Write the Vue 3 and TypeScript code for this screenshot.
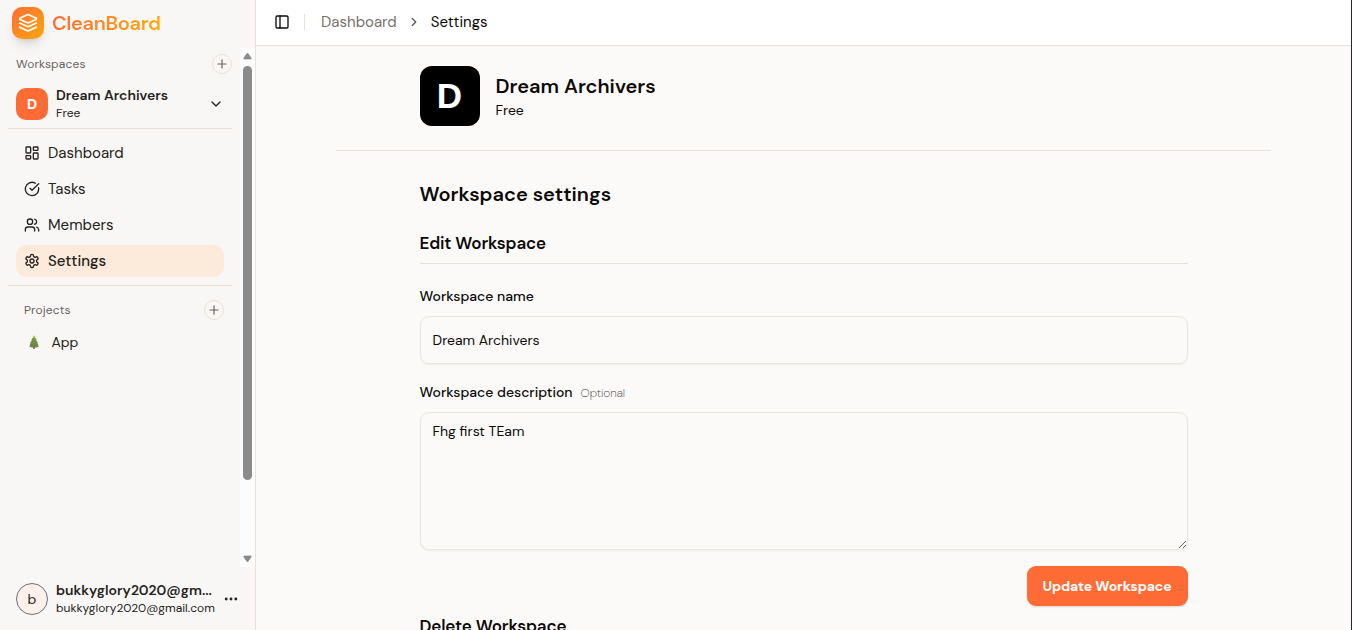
<script setup lang="ts">
import { ref } from 'vue'

interface NavItem {
  label: string
  icon: string[]
  active?: boolean
}

const nav: NavItem[] = [
  {
    label: 'Dashboard',
    icon: ['M4 3h5a1 1 0 0 1 1 1v7a1 1 0 0 1-1 1H4a1 1 0 0 1-1-1V4a1 1 0 0 1 1-1z', 'M15 3h5a1 1 0 0 1 1 1v3a1 1 0 0 1-1 1h-5a1 1 0 0 1-1-1V4a1 1 0 0 1 1-1z', 'M15 12h5a1 1 0 0 1 1 1v7a1 1 0 0 1-1 1h-5a1 1 0 0 1-1-1v-7a1 1 0 0 1 1-1z', 'M4 16h5a1 1 0 0 1 1 1v3a1 1 0 0 1-1 1H4a1 1 0 0 1-1-1v-3a1 1 0 0 1 1-1z'],
  },
  { label: 'Tasks', icon: ['M21.801 10A10 10 0 1 1 17 3.335', 'm9 11 3 3L22 4'] },
  {
    label: 'Members',
    icon: ['M16 21v-2a4 4 0 0 0-4-4H6a4 4 0 0 0-4 4v2', 'M9 3a4 4 0 1 0 0 8 4 4 0 0 0 0-8z', 'M22 21v-2a4 4 0 0 0-3-3.87', 'M16 3.13a4 4 0 0 1 0 7.75'],
  },
  {
    label: 'Settings',
    active: true,
    icon: ['M12.22 2h-.44a2 2 0 0 0-2 2v.18a2 2 0 0 1-1 1.73l-.43.25a2 2 0 0 1-2 0l-.15-.08a2 2 0 0 0-2.73.73l-.22.38a2 2 0 0 0 .73 2.73l.15.1a2 2 0 0 1 1 1.72v.51a2 2 0 0 1-1 1.74l-.15.09a2 2 0 0 0-.73 2.73l.22.38a2 2 0 0 0 2.73.73l.15-.08a2 2 0 0 1 2 0l.43.25a2 2 0 0 1 1 1.73V20a2 2 0 0 0 2 2h.44a2 2 0 0 0 2-2v-.18a2 2 0 0 1 1-1.73l.43-.25a2 2 0 0 1 2 0l.15.08a2 2 0 0 0 2.73-.73l.22-.39a2 2 0 0 0-.73-2.73l-.15-.08a2 2 0 0 1-1-1.74v-.5a2 2 0 0 1 1-1.74l.15-.09a2 2 0 0 0 .73-2.73l-.22-.38a2 2 0 0 0-2.73-.73l-.15.08a2 2 0 0 1-2 0l-.43-.25a2 2 0 0 1-1-1.73V4a2 2 0 0 0-2-2z', 'M12 9a3 3 0 1 0 0 6 3 3 0 0 0 0-6z'],
  },
]

const workspaceName = ref('Dream Archivers')
const description = ref('Fhg first TEam')
</script>

<template>
  <div class="app">
    <aside class="sidebar">
      <div class="brand">
        <span class="logo">
          <svg class="ico" width="20" height="20" viewBox="0 0 24 24">
            <path d="m12.83 2.18a2 2 0 0 0-1.66 0L2.6 6.08a1 1 0 0 0 0 1.83l8.58 3.91a2 2 0 0 0 1.66 0l8.58-3.9a1 1 0 0 0 0-1.83Z" />
            <path d="m22 12-9.17 4.16a2 2 0 0 1-1.66 0L2 12" />
            <path d="m22 17-9.17 4.16a2 2 0 0 1-1.66 0L2 17" />
          </svg>
        </span>
        <span class="brand-name">CleanBoard</span>
      </div>

      <div class="scroll-area">
        <div class="scroll-body">
          <div class="group-head ws-head">
            <span class="t-workspaces">Workspaces</span>
            <button class="plus" aria-label="Add workspace">
              <svg class="ico" width="14" height="14" viewBox="0 0 24 24"><path d="M5 12h14M12 5v14" /></svg>
            </button>
          </div>
          <div class="switcher">
            <span class="ws-badge">D</span>
            <div class="stack">
              <span class="ws-name">Dream Archivers</span>
              <span class="ws-plan">Free</span>
            </div>
            <svg class="ico chev" width="16" height="16" viewBox="0 0 24 24"><path d="m6 9 6 6 6-6" /></svg>
          </div>
          <div class="rule"></div>
          <nav class="nav">
            <a v-for="item in nav" :key="item.label" class="nav-item" :class="{ active: item.active }">
              <svg class="ico" width="16" height="16" viewBox="0 0 24 24">
                <path v-for="d in item.icon" :key="d" :d="d" />
              </svg>
              <span>{{ item.label }}</span>
            </a>
          </nav>
          <div class="rule"></div>
          <div class="group-head pr-head">
            <span class="t-projects">Projects</span>
            <button class="plus" aria-label="Add project">
              <svg class="ico" width="14" height="14" viewBox="0 0 24 24"><path d="M5 12h14M12 5v14" /></svg>
            </button>
          </div>
          <div class="project">
            <svg width="10" height="14" viewBox="0 0 10 14">
              <path d="M4 11h2v2.8H4z" fill="#8a5a3c" />
              <path d="M5 1 7.4 4.6 7.2 5.2 8.9 8 8.6 8.6 9.8 11.4Q5 14.2.2 11.4L1.4 8.6 1.1 8 2.8 5.2 2.6 4.6z" fill="#5b9a48" />
              <path d="M5 0 5.7 1.3 6.6 1.6 5.8 2.3 5 3 4.2 2.3 3.4 1.6 4.3 1.3z" fill="#e6c04c" />
              <circle cx="3.8" cy="6.4" r=".9" fill="#c5633e" />
              <circle cx="6.5" cy="7.8" r=".9" fill="#d65c3e" />
              <circle cx="2.8" cy="10" r="1" fill="#a85a48" />
              <circle cx="5.6" cy="10.9" r=".9" fill="#c5533e" />
              <circle cx="7.8" cy="10.6" r=".7" fill="#8f6a50" />
              <circle cx="5" cy="4.5" r=".6" fill="#d9a441" />
            </svg>
            <span>App</span>
          </div>
        </div>
        <div class="scrollbar">
          <svg width="9" height="8" viewBox="0 0 9 8"><path d="M4.5 1.1 8.2 6.2 7.9 6.9H1.1L.8 6.2z" fill="#8b8b8b" stroke="#8b8b8b" stroke-linejoin="round" /></svg>
          <div class="thumb"></div>
          <svg class="down" width="9" height="8" viewBox="0 0 9 8"><path d="M4.5 6.9.8 1.8 1.1 1.1H7.9L8.2 1.8z" fill="#8b8b8b" stroke="#8b8b8b" stroke-linejoin="round" /></svg>
        </div>
      </div>

      <div class="user">
        <span class="avatar">b</span>
        <div class="stack">
          <span class="user-name">bukkyglory2020@gm...</span>
          <span class="user-mail">bukkyglory2020@gmail.com</span>
        </div>
        <svg class="dots" width="14" height="4" viewBox="0 0 14 4">
          <circle cx="2.2" cy="2" r="1.45" /><circle cx="7" cy="2" r="1.45" /><circle cx="11.8" cy="2" r="1.45" />
        </svg>
      </div>
    </aside>

    <main class="main">
      <header class="topbar">
        <svg class="ico" width="16" height="16" viewBox="0 0 24 24"><rect x="3" y="3" width="18" height="18" rx="2" /><path d="M9 3v18" /></svg>
        <span class="vline"></span>
        <span class="crumb">Dashboard</span>
        <svg class="ico sep" width="14" height="14" viewBox="0 0 24 24"><path d="m9 18 6-6-6-6" /></svg>
        <span class="crumb-now">Settings</span>
      </header>

      <section class="hero">
        <span class="big-badge">D</span>
        <div class="stack">
          <span class="hero-name">Dream Archivers</span>
          <span class="hero-plan">Free</span>
        </div>
      </section>
      <div class="wide-rule"></div>

      <section class="content">
        <h2>Workspace settings</h2>
        <h3 class="edit">Edit Workspace</h3>
        <label class="l-name">Workspace name</label>
        <input v-model="workspaceName" type="text" spellcheck="false" />
        <label class="l-desc"><span>Workspace description</span><small>Optional</small></label>
        <textarea v-model="description" spellcheck="false"></textarea>
        <button class="update"><span>Update Workspace</span></button>
        <h3 class="delete">Delete Workspace</h3>
      </section>
    </main>
  </div>
</template>

<style>
html,
body {
  margin: 0;
  overflow: hidden;
}
</style>

<style scoped>
* {
  box-sizing: border-box;
}
.app {
  display: flex;
  width: 1352px;
  height: 630px;
  overflow: hidden;
  background: #fcfaf9;
  border-right: 1px solid #262626;
  color: #0c0a09;
  font-family: 'DM Sans', Inter, 'Liberation Sans', sans-serif;
  white-space: nowrap;
}
button {
  font-family: inherit;
  padding: 0;
}
.ico {
  flex: none;
  fill: none;
  stroke: currentColor;
  stroke-width: 2;
  stroke-linecap: round;
  stroke-linejoin: round;
}
.stack {
  display: flex;
  flex-direction: column;
}

.sidebar {
  display: flex;
  flex-direction: column;
  flex: none;
  width: 256px;
  background: #f9f7f6;
  border-right: 1px solid #ebe1d9;
  color: #262220;
}
.brand {
  display: flex;
  flex: none;
  align-items: center;
  gap: 8px;
  height: 48px;
  padding: 0 0 2px 12px;
}
.logo {
  display: flex;
  align-items: center;
  justify-content: center;
  width: 32px;
  height: 32px;
  border-radius: 10px;
  color: #fff;
  background: linear-gradient(135deg, #ff6b35, #ffa90d);
  box-shadow: 0 8px 12px -3px rgba(0, 0, 0, 0.13), 0 3px 5px -3px rgba(0, 0, 0, 0.12);
}
.brand-name {
  font-size: 20px;
  font-weight: 600;
  line-height: 28px;
  letter-spacing: -0.32px;
  color: transparent;
  background: linear-gradient(90deg, #ff6b35, #ffa90d);
  background-clip: text;
}
.scroll-area {
  display: flex;
  flex: none;
  height: 519px;
}
.scroll-body {
  width: 240px;
  padding: 0 8px;
}
.scrollbar {
  display: flex;
  flex-direction: column;
  align-items: flex-start;
  width: 15px;
  padding: 4px 0 4px 3px;
  background: #fcfcfc;
}
.thumb {
  width: 9px;
  height: 414px;
  margin: 6px 0 0;
  border-radius: 5px;
  background: #8b8b8b;
}
.down {
  margin-top: auto;
}
.group-head {
  display: flex;
  align-items: center;
  justify-content: space-between;
  height: 32px;
  font-size: 12px;
  color: #67625f;
}
.ws-head {
  padding-left: 8px;
}
.pr-head {
  margin-top: 8px;
  padding: 0 8px 0 16px;
}
.t-workspaces,
.t-projects {
  letter-spacing: 0.16px;
}
.plus {
  display: flex;
  align-items: center;
  justify-content: center;
  width: 20px;
  height: 20px;
  border: 1px solid #ebe1d5;
  border-radius: 50%;
  background: transparent;
  color: #67625f;
}
.switcher {
  display: flex;
  align-items: center;
  height: 48px;
  padding: 0 8px;
}
.ws-badge {
  display: flex;
  align-items: center;
  justify-content: center;
  width: 32px;
  height: 32px;
  margin-right: 8px;
  border-radius: 10px;
  background: #ff6b35;
  color: #fff;
  font: 700 14px 'Liberation Sans', sans-serif;
}
.ws-name {
  font-size: 14px;
  font-weight: 600;
  height: 18px;
  line-height: 16px;
}
.ws-plan {
  font-size: 12px;
  line-height: 16px;
}
.chev {
  margin-left: auto;
}
.rule {
  height: 1px;
  background: #ebe1d5;
}
.nav {
  display: flex;
  flex-direction: column;
  gap: 4px;
  padding: 8px;
}
.nav-item {
  display: flex;
  align-items: center;
  gap: 8px;
  height: 32px;
  padding: 0 8px;
  border-radius: 10px;
  font-size: 15px;
}
.nav-item.active {
  background: #fcebda;
  font-weight: 500;
}
.project {
  display: flex;
  align-items: center;
  gap: 13px;
  height: 32px;
  padding-left: 20.5px;
  font-size: 14px;
}
.user {
  display: flex;
  align-items: center;
  height: 63px;
  padding-left: 16px;
}
.avatar {
  display: flex;
  align-items: center;
  justify-content: center;
  width: 32px;
  height: 32px;
  margin-right: 8px;
  border: 1px solid #6b7080;
  border-radius: 50%;
  background: #fbf1ea;
  font-size: 14px;
}
.user-name {
  width: 159px;
  height: 18px;
  font-size: 14px;
  font-weight: 600;
  line-height: 16px;
}
.user-mail {
  font-size: 12px;
  line-height: 16px;
}
.dots {
  margin-left: 9px;
  fill: #262220;
}

.main {
  flex: 1;
  min-width: 0;
}
.topbar {
  display: flex;
  align-items: center;
  height: 46px;
  padding: 0 0 2px 18px;
  background: #fff;
  border-bottom: 1px solid #e8e2da;
  font-size: 15px;
}
.vline {
  width: 1px;
  height: 16px;
  margin: 0 16px 0 14px;
  background: #ebe1d5;
}
.crumb {
  color: #78716c;
}
.sep {
  margin: 0 10px;
  color: #57514d;
}
.hero {
  display: flex;
  align-items: center;
  gap: 16px;
  height: 104px;
  padding: 0 0 4px 163.5px;
}
.big-badge {
  display: flex;
  align-items: center;
  justify-content: center;
  width: 60px;
  height: 60px;
  border-radius: 12px;
  background: #000;
  color: #fff;
  font: 700 35px 'Liberation Sans', sans-serif;
}
.hero-name {
  height: 28px;
  font-size: 20px;
  font-weight: 600;
  line-height: 28px;
}
.hero-plan {
  font-size: 14px;
  line-height: 20px;
}
.wide-rule {
  width: 935px;
  height: 1px;
  margin-left: 80px;
  background: #ebe1d9;
}
.content {
  display: flex;
  flex-direction: column;
  width: 768px;
  margin-left: 163.5px;
  padding-top: 29px;
}
h2 {
  margin: 0;
  font-size: 20px;
  font-weight: 600;
  line-height: 28px;
}
h3 {
  margin: 0;
  font-size: 17px;
  font-weight: 600;
  letter-spacing: -0.16px;
}
.edit {
  height: 42px;
  margin-top: 14px;
  padding-top: 9px;
  line-height: 25px;
  border-bottom: 1px solid #ebe1d9;
}
.l-name,
.l-desc {
  font-size: 14px;
  font-weight: 500;
  line-height: 20px;
}
.l-name {
  margin-top: 22px;
}
input,
textarea {
  margin: 0;
  border: 1px solid #ebe6dd;
  border-radius: 9px;
  outline: none;
  background: #fcfaf9;
  color: #0c0a09;
  font-family: inherit;
  font-size: 14px;
  box-shadow: 0 1px 2px rgba(0, 0, 0, 0.05);
}
input {
  height: 48px;
  margin-top: 10px;
  padding: 0 12px;
}
.l-desc {
  display: flex;
  gap: 8px;
  height: 20px;
  margin-top: 18px;
}
small {
  font-size: 12px;
  line-height: 23px;
  font-weight: 200;
  letter-spacing: -0.03px;
  color: #45424c;
}
textarea {
  height: 138px;
  margin-top: 10px;
  padding: 8px 12px;
  line-height: 20px;
  resize: vertical;
}
.update {
  align-self: flex-end;
  width: 161px;
  height: 40px;
  margin-top: 16px;
  border: 0;
  border-radius: 9px;
  background: #ff6b35;
  color: #fff;
  font-size: 14px;
  font-weight: 700;
  letter-spacing: -0.12px;
  box-shadow: 0 1px 2px rgba(0, 0, 0, 0.15);
}
.delete {
  margin-top: 8px;
  line-height: 25px;
}
</style>
